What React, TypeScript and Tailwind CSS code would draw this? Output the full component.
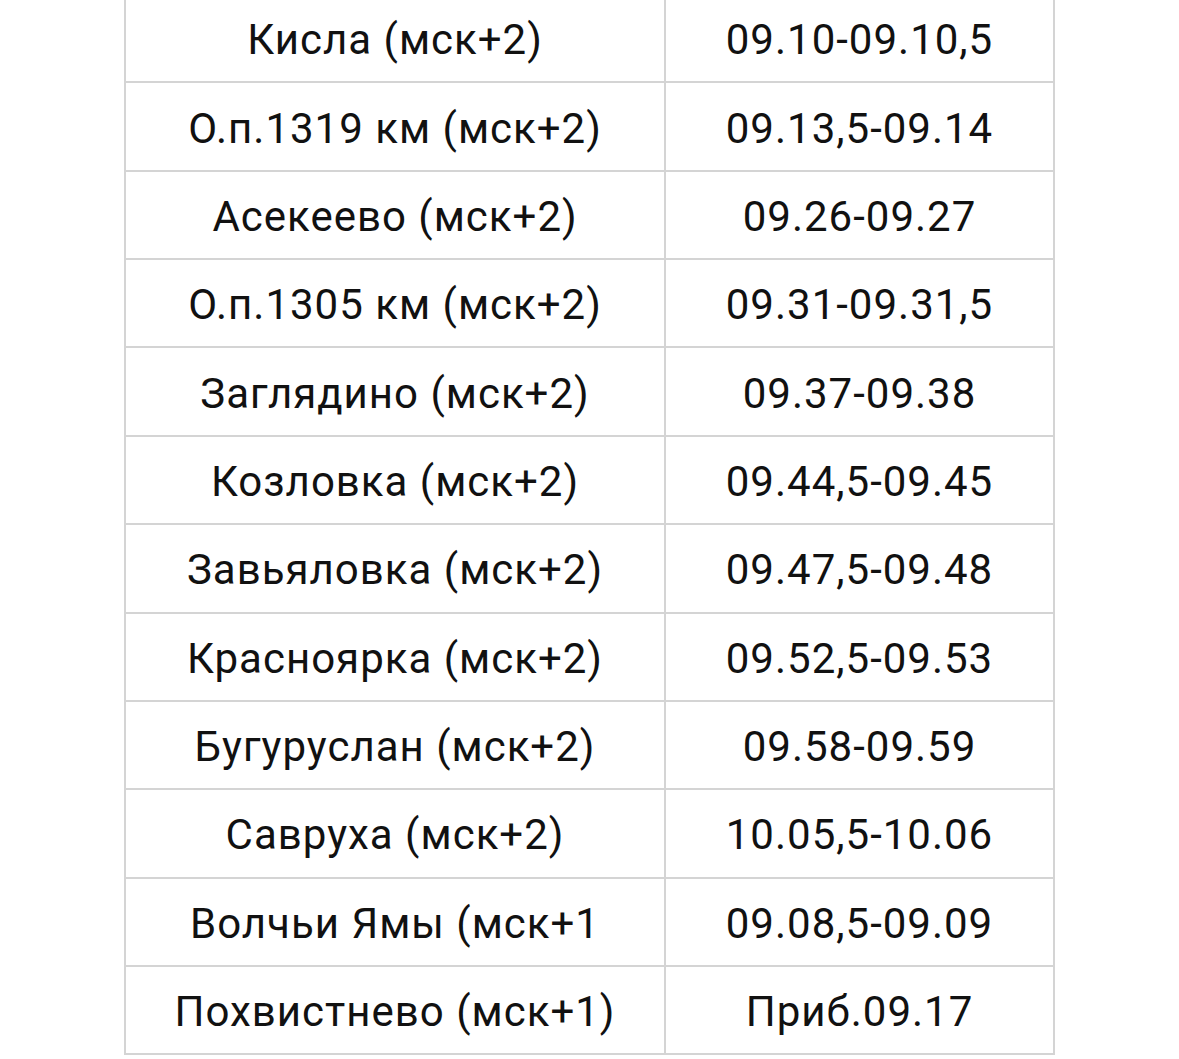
const rows: [string, string][] = [
  ['Кисла (мск+2)', '09.10-09.10,5'],
  ['О.п.1319 км (мск+2)', '09.13,5-09.14'],
  ['Асекеево (мск+2)', '09.26-09.27'],
  ['О.п.1305 км (мск+2)', '09.31-09.31,5'],
  ['Заглядино (мск+2)', '09.37-09.38'],
  ['Козловка (мск+2)', '09.44,5-09.45'],
  ['Завьяловка (мск+2)', '09.47,5-09.48'],
  ['Красноярка (мск+2)', '09.52,5-09.53'],
  ['Бугуруслан (мск+2)', '09.58-09.59'],
  ['Савруха (мск+2)', '10.05,5-10.06'],
  ['Волчьи Ямы (мск+1', '09.08,5-09.09'],
  ['Похвистнево (мск+1)', 'Приб.09.17'],
];

export default function App() {
  return (
    <div className="w-[1179px] h-[1059px] overflow-hidden bg-white font-['Roboto',sans-serif] font-normal text-[#111]">
      <div className="ml-[124px] mt-[-5px] w-[931px] border-l-2 border-[#d4d4d4]">
        {rows.map(([station, time]) => (
          <div key={station} className="flex h-[88.36px] border-b-2 border-[#d4d4d4]">
            <div className="w-[540px] flex items-center justify-center border-r-2 border-[#d4d4d4] text-[42px] tracking-[1px] pt-[3px]">
              {station}
            </div>
            <div className="w-[389px] flex items-center justify-center border-r-2 border-[#d4d4d4] text-[42px] tracking-[1px] pt-[3px]">
              {time}
            </div>
          </div>
        ))}
      </div>
    </div>
  );
}
